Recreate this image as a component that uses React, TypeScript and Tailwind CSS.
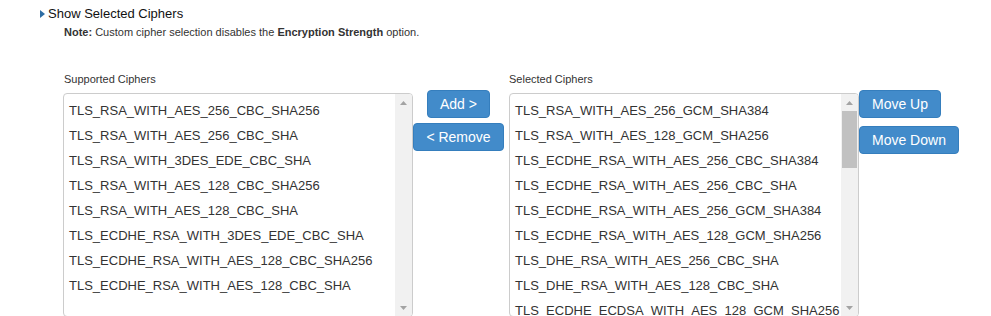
import React from "react";

const supported = [
  "TLS_RSA_WITH_AES_256_CBC_SHA256",
  "TLS_RSA_WITH_AES_256_CBC_SHA",
  "TLS_RSA_WITH_3DES_EDE_CBC_SHA",
  "TLS_RSA_WITH_AES_128_CBC_SHA256",
  "TLS_RSA_WITH_AES_128_CBC_SHA",
  "TLS_ECDHE_RSA_WITH_3DES_EDE_CBC_SHA",
  "TLS_ECDHE_RSA_WITH_AES_128_CBC_SHA256",
  "TLS_ECDHE_RSA_WITH_AES_128_CBC_SHA",
];

const selected = [
  "TLS_RSA_WITH_AES_256_GCM_SHA384",
  "TLS_RSA_WITH_AES_128_GCM_SHA256",
  "TLS_ECDHE_RSA_WITH_AES_256_CBC_SHA384",
  "TLS_ECDHE_RSA_WITH_AES_256_CBC_SHA",
  "TLS_ECDHE_RSA_WITH_AES_256_GCM_SHA384",
  "TLS_ECDHE_RSA_WITH_AES_128_GCM_SHA256",
  "TLS_DHE_RSA_WITH_AES_256_CBC_SHA",
  "TLS_DHE_RSA_WITH_AES_128_CBC_SHA",
  "TLS_ECDHE_ECDSA_WITH_AES_128_GCM_SHA256",
  "TLS_ECDHE_ECDSA_WITH_AES_256_GCM_SHA384",
];

function Arrow({ up }: { up: boolean }) {
  return (
    <svg width="7" height="4" viewBox="0 0 7 4" className="mx-auto">
      <polygon points={up ? "0,4 7,4 3.5,0" : "0,0 7,0 3.5,4"} fill="#a3a3a3" />
    </svg>
  );
}

function CipherList({ items, thumb }: { items: string[]; thumb: boolean }) {
  return (
    <div className="flex h-[224px] w-[350px] overflow-hidden rounded-[4px] border border-[#cccccc] bg-white">
      <div className="flex-1 overflow-hidden pt-[4px]">
        {items.map((c) => (
          <div key={c} className="h-[25px] whitespace-nowrap pl-[5px] text-[13px] leading-[25px] text-[#333333]">
            {c}
          </div>
        ))}
      </div>
      <div className="flex w-[17px] flex-col bg-[#f1f1f1]">
        <div className="flex h-[17px] items-center">
          <Arrow up />
        </div>
        <div className="flex-1 px-[1px]">
          {thumb && <div className="h-[57px] bg-[#c1c1c1]" />}
        </div>
        <div className="flex h-[17px] items-center">
          <Arrow up={false} />
        </div>
      </div>
    </div>
  );
}

function Btn({ children }: { children: React.ReactNode }) {
  return (
    <button className="h-[28px] whitespace-nowrap rounded-[4px] border border-[#357ebd] bg-[#428bca] px-[12px] text-[14px] leading-[26px] text-white">
      {children}
    </button>
  );
}

export default function App() {
  return (
    <div className="h-[316px] overflow-hidden bg-white pt-[6px] font-['Liberation_Sans',Arial,sans-serif] text-[#333333]">
      <div className="flex h-[16px] items-center pl-[40px]">
        <svg width="5" height="8" viewBox="0 0 5 8" className="mr-[3px]">
          <polygon points="0,0 5,4 0,8" fill="#2e6da4" />
        </svg>
        <span className="text-[13px] leading-[16px] text-[#111111]">Show Selected Ciphers</span>
      </div>
      <div className="mt-[3px] pl-[64px] text-[11px] leading-[14px]">
        <b>Note:</b> Custom cipher selection disables the <b>Encryption Strength</b> option.
      </div>

      <div className="mt-[33px] flex items-start pl-[63px]">
        <div>
          <div className="h-[14px] pl-[1px] text-[11px] leading-[14px]">Supported Ciphers</div>
          <div className="mt-[7px]">
            <CipherList items={supported} thumb={false} />
          </div>
        </div>

        <div className="flex w-[91px] flex-col items-center pt-[18px]">
          <Btn>Add &gt;</Btn>
          <div className="mt-[5px]">
            <Btn>&lt; Remove</Btn>
          </div>
        </div>

        <div className="ml-[5px]">
          <div className="h-[14px] text-[11px] leading-[14px]">Selected Ciphers</div>
          <div className="mt-[7px]">
            <CipherList items={selected} thumb />
          </div>
        </div>

        <div className="flex flex-col items-start pt-[18px]">
          <Btn>Move Up</Btn>
          <div className="mt-[8px]">
            <Btn>Move Down</Btn>
          </div>
        </div>
      </div>
    </div>
  );
}
